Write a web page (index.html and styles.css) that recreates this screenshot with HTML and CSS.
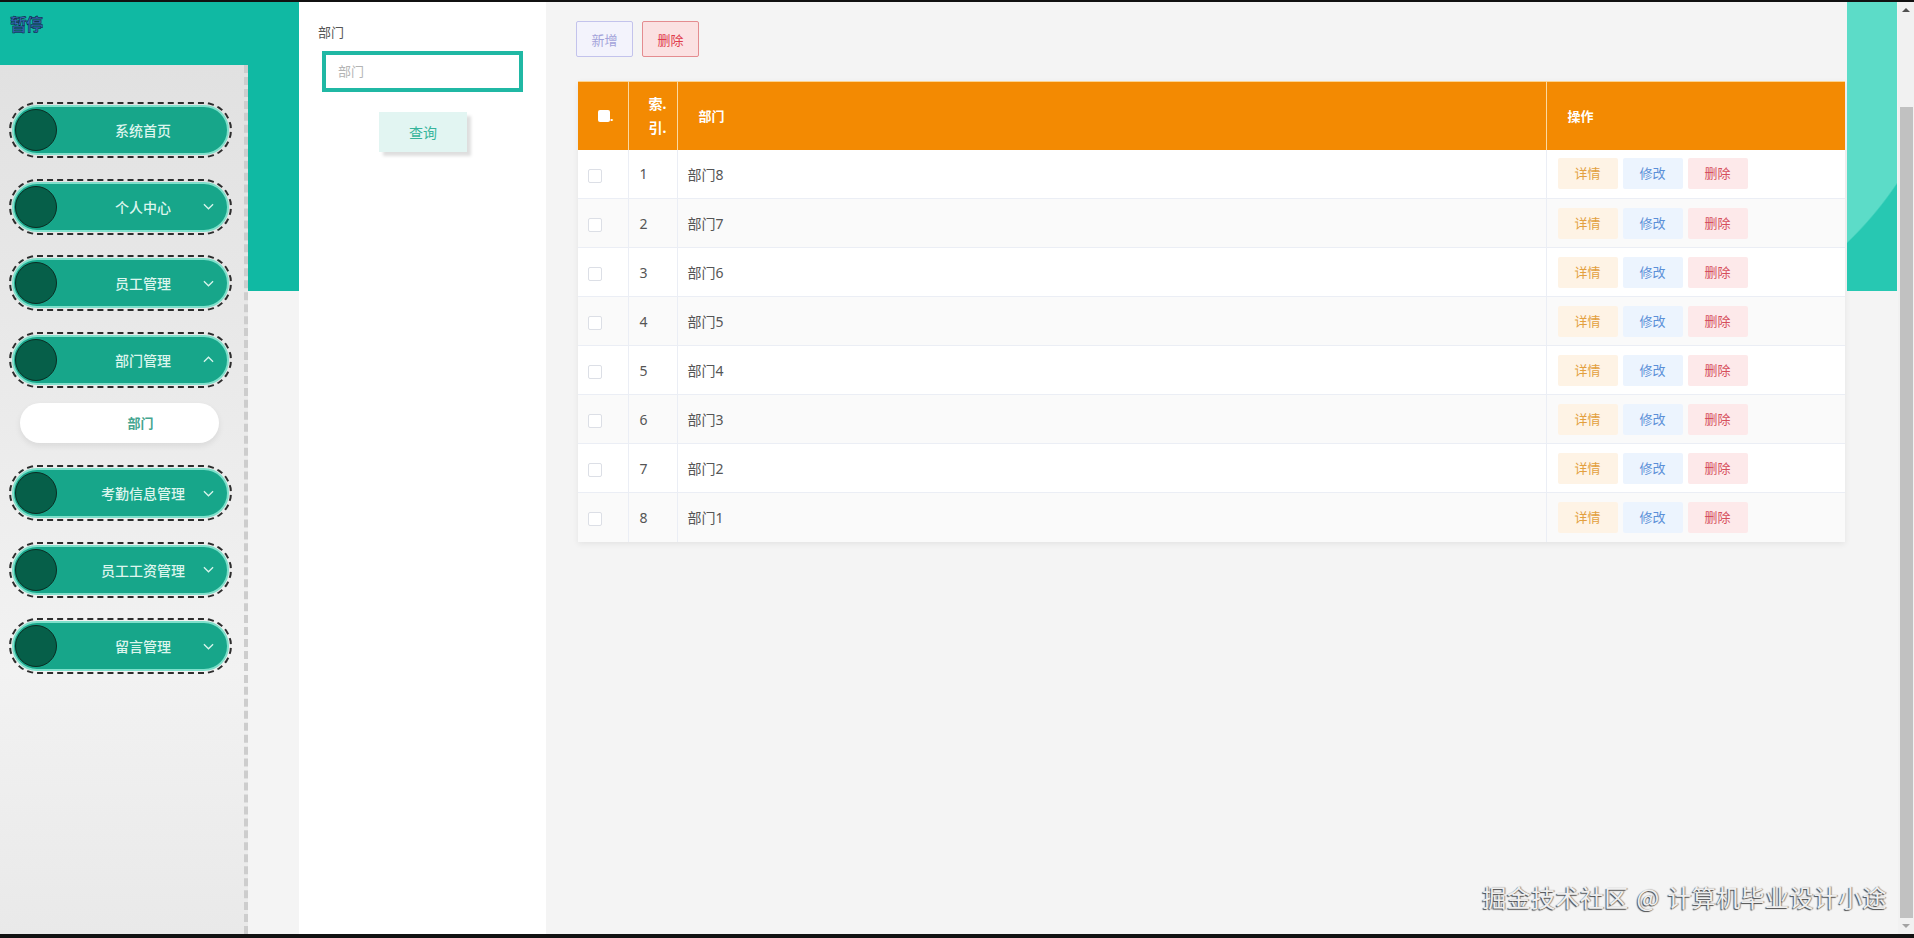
FILE: index.html
```
<!DOCTYPE html>
<html lang="zh-CN">
<head>
    <meta charset="UTF-8">
    <title>部门</title>
    <link rel="stylesheet" href="styles.css">
</head>
<body>
    <div class="screen">
        <div class="page">
            <aside class="left-col">
                <div class="brand">暂停</div>
                <nav class="sidebar">
                    <div class="menu-item">
                        <div class="pill"><span class="dot"></span><span class="label">系统首页</span></div>
                    </div>
                    <div class="menu-item">
                        <div class="pill"><span class="dot"></span><span class="label">个人中心</span>
                            <svg class="arrow" viewBox="0 0 12 7"><polyline points="1,1 6,6 11,1"/></svg></div>
                    </div>
                    <div class="menu-item">
                        <div class="pill"><span class="dot"></span><span class="label">员工管理</span>
                            <svg class="arrow" viewBox="0 0 12 7"><polyline points="1,1 6,6 11,1"/></svg></div>
                    </div>
                    <div class="menu-item">
                        <div class="pill"><span class="dot"></span><span class="label">部门管理</span>
                            <svg class="arrow" viewBox="0 0 12 7"><polyline points="1,6 6,1 11,6"/></svg></div>
                    </div>
                    <div class="sub-item">部门</div>
                    <div class="menu-item">
                        <div class="pill"><span class="dot"></span><span class="label">考勤信息管理</span>
                            <svg class="arrow" viewBox="0 0 12 7"><polyline points="1,1 6,6 11,1"/></svg></div>
                    </div>
                    <div class="menu-item">
                        <div class="pill"><span class="dot"></span><span class="label">员工工资管理</span>
                            <svg class="arrow" viewBox="0 0 12 7"><polyline points="1,1 6,6 11,1"/></svg></div>
                    </div>
                    <div class="menu-item">
                        <div class="pill"><span class="dot"></span><span class="label">留言管理</span>
                            <svg class="arrow" viewBox="0 0 12 7"><polyline points="1,1 6,6 11,1"/></svg></div>
                    </div>
                </nav>
            </aside>

            <section class="filter">
                <div class="filter-label">部门</div>
                <div class="filter-input">部门</div>
                <button class="query-btn">查询</button>
            </section>

            <main class="main">
                <div class="content">
                    <div class="toolbar">
                        <button class="btn-add">新增</button>
                        <button class="btn-del">删除</button>
                    </div>
                    <table class="grid">
                        <thead>
                            <tr>
                                <th class="col-check"><span class="head-box"></span>.</th>
                                <th class="col-index">索.<br>引.</th>
                                <th class="col-name">部门</th>
                                <th class="col-ops">操作</th>
                            </tr>
                        </thead>
                        <tbody id="rows"></tbody>
                    </table>
                </div>
                <div class="deco"></div>
            </main>

            <div class="scrollbar">
                <div class="sb-btn"><span class="tri-up"></span></div>
                <div class="sb-track"><div class="sb-thumb"></div></div>
                <div class="sb-btn"><span class="tri-down"></span></div>
            </div>
        </div>
        <div class="watermark">掘金技术社区 @ 计算机毕业设计小途</div>
    </div>

    <script>
        const rows = document.getElementById('rows');
        const names = ['部门8', '部门7', '部门6', '部门5', '部门4', '部门3', '部门2', '部门1'];

        names.forEach((name, i) => {
            const tr = document.createElement('tr');
            tr.innerHTML =
                '<td class="col-check"><span class="box"></span></td>' +
                '<td class="col-index">' + (i + 1) + '</td>' +
                '<td class="col-name">' + name + '</td>' +
                '<td class="col-ops"><span class="op op-info">详情</span>' +
                '<span class="op op-edit">修改</span>' +
                '<span class="op op-del">删除</span></td>';
            rows.appendChild(tr);
        });
    </script>
</body>
</html>
```

FILE: styles.css
```
* {
    margin: 0;
    padding: 0;
    box-sizing: border-box;
}
body {
    font-family: "Noto Sans", "Noto Sans CJK SC", sans-serif;
    background: #111;
    overflow: hidden;
}
.screen {
    position: relative;
    height: 938px;
    border-top: 2px solid #111;
    border-bottom: 4px solid #111;
    background: #f4f4f4;
}
.page {
    display: flex;
    height: 100%;
}

/* left column */
.left-col {
    width: 299px;
    display: flex;
    flex-direction: column;
    background: linear-gradient(#10b9a3 0, #10b9a3 289px, #f4f4f4 289px);
}
.brand {
    height: 63px;
    padding: 9px 0 0 10px;
    font-size: 17px;
    font-weight: bold;
    color: #3569b5;
    -webkit-text-stroke: 0.5px #0b1d3a;
    letter-spacing: -1px;
}
.sidebar {
    flex: 1;
    width: 248px;
    padding-top: 37px;
    background: linear-gradient(180deg, #e1e1e1 0%, #ececec 45%, #f2f2f2 70%, #e9e9e9 100%);
    border-right: 4px dashed #cdcdcd;
}
.menu-item {
    width: 223px;
    height: 56px;
    margin: 0 0 20.5px 9px;
    padding: 1px;
    border: 2px dashed #2d2d2d;
    border-radius: 30px;
}
.pill {
    height: 100%;
    display: grid;
    grid-template-columns: 42px 1fr;
    align-items: center;
    background: #17a68a;
    border: 2px solid #7fe0cb;
    border-radius: 26px;
    padding-left: 1px;
}
.dot {
    width: 42px;
    height: 42px;
    border-radius: 50%;
    background: #065f49;
    border: 1.5px solid #0b2c22;
}
.label {
    grid-column: 2;
    grid-row: 1;
    text-align: center;
    font-size: 14px;
    font-weight: 500;
    color: #dcf5ed;
    padding-left: 2px;
}
.arrow {
    grid-column: 2;
    grid-row: 1;
    justify-self: end;
    width: 11px;
    height: 7px;
    margin-right: 13px;
    fill: none;
    stroke: #d9f5ec;
    stroke-width: 1.4;
}
.sub-item {
    width: 199px;
    height: 40px;
    margin: -5px 0 22px 20px;
    padding-left: 42px;
    background: #fff;
    border-radius: 20px;
    box-shadow: 0 3px 6px rgba(0, 0, 0, 0.08);
    text-align: center;
    line-height: 40px;
    font-size: 13px;
    font-weight: bold;
    color: #45a58f;
}

/* filter panel */
.filter {
    width: 247px;
    background: #fff;
    padding: 21px 0 0 19px;
}
.filter-label {
    font-size: 13px;
    line-height: 18px;
    color: #555;
}
.filter-input {
    width: 201px;
    height: 41px;
    margin: 10px 0 0 4px;
    border: 4px solid #20b8a4;
    padding-left: 12px;
    line-height: 33px;
    font-size: 13px;
    color: #b4b4b4;
}
.query-btn {
    display: block;
    width: 88px;
    height: 40px;
    margin: 20px 0 0 61px;
    border: none;
    background: #e2f5f2;
    color: #36b49b;
    font-family: inherit;
    font-size: 14px;
    box-shadow: 4px 4px 3px rgba(0, 0, 0, 0.13);
}

/* main area */
.main {
    flex: 1;
    display: flex;
    background: #f4f4f4;
}
.content {
    flex: 1;
    padding: 19px 2px 0 30px;
}
.toolbar {
    display: flex;
    gap: 9px;
}
.toolbar button {
    width: 57px;
    height: 36px;
    font-family: inherit;
    font-size: 13px;
    border-radius: 2px;
}
.btn-add {
    background: #f3f3fc;
    border: 1px solid #c3c3ec;
    color: #a3a3da;
}
.btn-del {
    background: #fbe1e2;
    border: 1px solid #e48c90;
    color: #e03c4c;
}
.grid {
    width: 1267px;
    margin: 24px 0 0 2px;
    border-collapse: collapse;
    background: #fff;
    box-shadow: 0 2px 6px rgba(0, 0, 0, 0.07);
    table-layout: fixed;
}
.grid th {
    height: 68px;
    background: #f38a02;
    border-top: 1px solid #fcd48e;
    border-right: 1px solid #fbd9a0;
    color: #fff;
    font-size: 13px;
    font-weight: bold;
    text-align: left;
    padding-left: 21px;
}
.grid th:last-child {
    border-right: none;
}
.grid th.col-check {
    padding-left: 20px;
}
.grid th.col-index {
    padding-left: 20px;
    font-size: 14px;
    line-height: 24px;
}
.head-box {
    display: inline-block;
    width: 12px;
    height: 12px;
    background: #fff;
    border-radius: 2px;
    vertical-align: -1px;
}
.grid td {
    height: 49px;
    padding-left: 10px;
    border-bottom: 1px solid #ebeef5;
    border-right: 1px solid #ebeef5;
    font-size: 14px;
    color: #555;
}
.grid td:last-child {
    border-right: none;
}
.grid tbody tr:nth-child(even) td {
    background: #fafafa;
}
.grid tbody tr:last-child td {
    border-bottom: none;
}
.col-check { width: 50px; }
.col-index { width: 49px; }
.col-ops { width: 299px; }
.grid td.col-index { padding-left: 11px; }
.box {
    display: inline-block;
    width: 14px;
    height: 14px;
    border: 1px solid #dcdfe6;
    border-radius: 2px;
    background: #fff;
    vertical-align: middle;
}
.grid td.col-ops {
    padding-left: 11px;
}
.op {
    display: inline-block;
    width: 60px;
    height: 31px;
    line-height: 31px;
    margin-right: 5px;
    text-align: center;
    font-size: 13px;
    border-radius: 2px;
    vertical-align: middle;
}
.op-info { background: #fef3e5; color: #e3a03e; }
.op-edit { background: #ecf4fe; color: #5b90d8; }
.op-del { background: #fde9ea; color: #d6505c; }
.deco {
    width: 50px;
    height: 289px;
    margin-right: 1px;
    background: radial-gradient(circle 362px at -250px -20px, #5cdcc8 99.6%, #27c8b2 100%);
}

/* fake scrollbar */
.scrollbar {
    width: 16px;
    display: flex;
    flex-direction: column;
    background: #f1f1f1;
}
.sb-btn {
    height: 17px;
    display: flex;
    align-items: center;
    justify-content: center;
}
.tri-up {
    border-left: 4px solid transparent;
    border-right: 4px solid transparent;
    border-bottom: 4px solid #505050;
}
.tri-down {
    border-left: 4px solid transparent;
    border-right: 4px solid transparent;
    border-top: 4px solid #a3a3a3;
}
.sb-track {
    flex: 1;
    padding: 89px 1px 0 2px;
}
.sb-thumb {
    height: 811px;
    background: #c1c1c1;
}

.watermark {
    position: absolute;
    right: 27px;
    bottom: 22px;
    font-family: "Noto Sans CJK SC", sans-serif;
    font-size: 24px;
    line-height: 30px;
    letter-spacing: 0.4px;
    word-spacing: 2px;
    color: #efefef;
    text-shadow: -1px 1px 1px #4a4a4a, 1px 0 1px #888;
}
```
